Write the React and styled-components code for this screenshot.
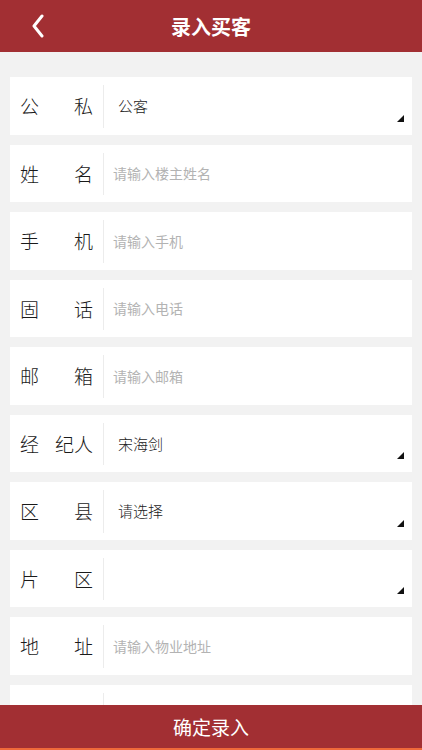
import React from "react";
import styled, { createGlobalStyle } from "styled-components";

const GlobalStyle = createGlobalStyle`
  html, body {
    margin: 0;
    padding: 0;
    background: #f2f2f2;
    font-family: "Noto Sans CJK SC", "Noto Sans", sans-serif;
  }
  * { box-sizing: border-box; }
`;

const fields = [
  { label: ["公", "私"], value: "公客", select: true },
  { label: ["姓", "名"], placeholder: "请输入楼主姓名" },
  { label: ["手", "机"], placeholder: "请输入手机" },
  { label: ["固", "话"], placeholder: "请输入电话" },
  { label: ["邮", "箱"], placeholder: "请输入邮箱" },
  { label: ["经", "纪人"], value: "宋海剑", select: true },
  { label: ["区", "县"], value: "请选择", select: true },
  { label: ["片", "区"], value: "", select: true },
  { label: ["地", "址"], placeholder: "请输入物业地址" },
  // 被底部按钮挡住的一行
  { label: [], placeholder: "" },
];

const App = () => {
  return (
    <Page>
      <GlobalStyle />
      <Header>
        <BackBtn>
          <svg width="14" height="24" viewBox="0 0 14 24">
            <path
              d="M11 2 L3 12 L11 22"
              fill="none"
              stroke="#fff"
              strokeWidth="3"
              strokeLinecap="round"
              strokeLinejoin="round"
            />
          </svg>
        </BackBtn>
        <Title>录入买客</Title>
      </Header>
      <Content>
        {fields.map((f, i) => (
          <Row key={i}>
            <Label>
              {f.label.map((c, j) => (
                <span key={j}>{c}</span>
              ))}
            </Label>
            <Divider />
            {f.select ? (
              <SelectBox>
                <SelectValue>{f.value}</SelectValue>
                <Triangle />
              </SelectBox>
            ) : (
              <Input placeholder={f.placeholder} />
            )}
          </Row>
        ))}
      </Content>
      <Footer>确定录入</Footer>
    </Page>
  );
};

const Page = styled.div`
  width: 100%;
  height: 750px;
  display: flex;
  flex-direction: column;
  overflow: hidden;
  background: #f2f2f2;
`;

const Header = styled.div`
  height: 52px;
  flex-shrink: 0;
  background: #a22f33;
  display: flex;
  align-items: center;
  justify-content: center;
  position: relative;
`;

const BackBtn = styled.div`
  position: absolute;
  left: 31px;
  top: 14px;
  display: flex;
`;

const Title = styled.div`
  color: #fff;
  font-size: 20px;
  font-weight: bold;
`;

const Content = styled.div`
  flex: 1;
  overflow: hidden;
  padding: 25px 10px 0;
  display: flex;
  flex-direction: column;
  gap: 10px;
`;

const Row = styled.div`
  height: 57.5px;
  flex-shrink: 0;
  background: #fff;
  display: flex;
  align-items: center;
`;

const Label = styled.div`
  width: 83px;
  padding-left: 10px;
  display: flex;
  justify-content: space-between;
  font-size: 19px;
  font-weight: 300;
  color: #1a1a1a;
`;

const Divider = styled.div`
  width: 1px;
  align-self: stretch;
  margin: 8px 0 7px 10px;
  background: #ececec;
`;

const Input = styled.input`
  flex: 1;
  border: none;
  outline: none;
  height: 100%;
  padding: 0 0 0 9px;
  font-family: inherit;
  font-size: 14px;
  color: #333;
  background: transparent;

  &::placeholder {
    color: #b3b3b3;
  }
`;

const SelectBox = styled.div`
  flex: 1;
  height: 100%;
  position: relative;
  display: flex;
  align-items: center;
  padding-left: 14px;
`;

const SelectValue = styled.span`
  font-size: 15px;
  font-weight: 300;
  color: #222;
`;

const Triangle = styled.div`
  position: absolute;
  right: 8px;
  bottom: 13px;
  width: 0;
  height: 0;
  border-style: solid;
  border-width: 0 0 7px 7px;
  border-color: transparent transparent #111 transparent;
`;

const Footer = styled.div`
  height: 45px;
  flex-shrink: 0;
  background: #a22f33;
  border-bottom: 2px solid #f0693a;
  color: #fff;
  font-size: 19px;
  display: flex;
  align-items: center;
  justify-content: center;
`;

export default App;
